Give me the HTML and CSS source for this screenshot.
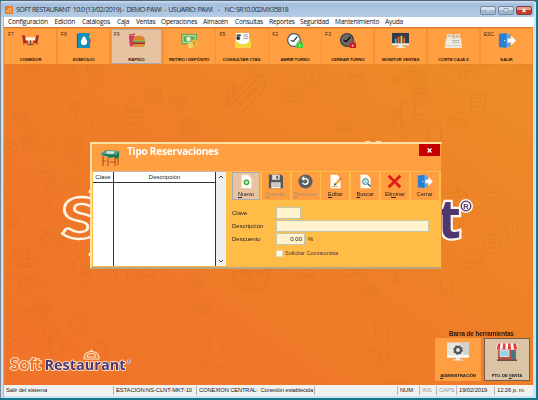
FILE: index.html
```html
<!DOCTYPE html>
<html lang="es">
<head>
<meta charset="utf-8">
<title>Soft Restaurant</title>
<link rel="stylesheet" href="styles.css">
</head>
<body>
<div class="window">
  <header class="titlebar">
    <svg class="app-icon" viewBox="0 0 8 8"><rect width="8" height="8" rx=".7" fill="#e97924"/><path d="M2 6V4.5h1.5V3H5V1.8h1V6M2 6h4" fill="none" stroke="#ffd5a0" stroke-width=".7"/></svg>
    <span class="title">SOFT RESTAURANT  10.0 (13/02/2019) -  DEMO PAWI  -  USUARIO: PAWI    -    NC: SR10.002MX35818</span>
    <div class="controls">
      <i><svg viewBox="0 0 16 9"><rect x="5" y="4" width="6" height="2" fill="#fff" stroke="#64748b" stroke-width=".5"/></svg></i>
      <i><svg viewBox="0 0 16 9"><rect x="5.500" y="2" width="5" height="4.500" fill="#fff" stroke="#56657b" stroke-width=".7"/><rect x="7.200" y="3.700" width="1.600" height="1.200" fill="#56657b"/></svg></i>
      <i class="red"><svg viewBox="0 0 16 9"><path d="M6 2.500l4 4m0-4l-4 4" stroke="#fff" stroke-width="1.500"/></svg></i>
    </div>
  </header>
  <nav class="menu">
    <span>Configuración</span><span>Edición</span><span>Catálogos</span><span>Caja</span><span>Ventas</span><span>Operaciones</span><span>Almacén</span><span>Consultas</span><span>Reportes</span><span>Seguridad</span><span>Mantenimiento</span><span>Ayuda</span>
  </nav>
  <main class="desk">
    <svg class="wall" viewBox="0 0 530 358">
      <defs>
        <g id="doodles" fill="none" stroke="#a85b18" stroke-width="1">
          <path d="M22 13l14 3-9 14zM23 14q6-4 12 2"/><circle cx="28" cy="19" r="1.2"/>
          <circle cx="69" cy="18" r="4"/><circle cx="69" cy="18" r="1.6"/>
          <circle cx="118" cy="-4" r="8"/><path d="M113-4q5-6 9 0t-6 2"/>
          <path d="M83 11h16l-2 20H85zM81 9h20M88 14v14m3-14v14m3-14v14"/>
          <path d="M133 7q6-8 14 0-7 6-14 0zm14 0l4 5"/>
          <path d="M8 64q8-9 18 0zM7 67h20M10 70h14"/>
          <path d="M65 60v-9h3v8-11h3v11-9h3v10l-3 10h-5zM82 58q9-12 18 0z"/>
          <circle cx="27" cy="90" r="9"/><circle cx="27" cy="90" r="6"/><path d="M27 84v12m-6-6h12m-10-4l8 8m0-8l-8 8"/>
          <path d="M143 32h14v18h-14zm3 4h8m-8 4h8m-8 4h8"/>
          <path d="M120 57q11-14 20 1zM118 60h23l-3 5h-17z"/>
          <path d="M144 -3q10-6 15 4"/>
          <path d="M32 120h15l-1 18H35zM35 118q-1-5 5-4"/>
          <path d="M37 150h9l-2 12h-5zM24 149q5-8 10 0z"/>
          <path d="M4 125q8-10 11 0-5 9-11 0z"/>
          <path d="M42 180h24v3H42zm2 6h22m-22 4h22m-20 3h18"/>
          <path d="M89 189q12-9 19 2-9 18-18 9-3-5-1-11zm4 4l1 1m4-2l1 1m-4 4l1 1m4-3l1 1"/>
          <path d="M62 199h14q-1 12-7 12t-7-12zm7 12v8m-4 0h8"/>
          <path d="M112 220q0-7 7-7t4 8l1 12h-9z"/>
          <path d="M15 211q9-10 18 0-9 9-18 0zm2-4h14m-13 7h12"/>
        </g>
      </defs>
      <g opacity=".12">
        <use href="#doodles" y="25"/>
        <use href="#doodles" x="158" y="10"/>
        <use href="#doodles" x="324" y="35"/>
        <use href="#doodles" x="12" y="190"/>
        <use href="#doodles" x="172" y="190"/>
        <use href="#doodles" x="338" y="176"/>
        <use href="#doodles" x="390" y="-20"/>
        <use href="#doodles" x="-22" y="102"/>
        <g fill="none" stroke="#a85b18" stroke-width="1.200">
          <path d="M223 76l24-26q10-4 14 3 2 6-3 11l-22 24q-12 8-16-1-2-7 3-11zm4 2l25-25m-21 30l26-27"/>
          <path d="M228 245h38l-7 17h-24zM397 75h14v22h-14z"/>
        </g>
      </g>
      <g font-family="Lato, sans-serif" font-weight="900" font-size="57">
        <text transform="translate(57 212) scale(1.25 1)" fill="#ee762a" stroke="#fff5e3" stroke-width="2.300">S</text>
        <text x="433.500" y="211" font-family="Open Sans, sans-serif" font-weight="700" font-size="54" fill="#51376f" stroke="#fff7ee" stroke-width="4.500" paint-order="stroke">t</text>
      </g>
      <circle cx="462" cy="179" r="7" fill="#fff7ee"/><circle cx="462" cy="179" r="4.800" fill="#fff7ee" stroke="#51376f" stroke-width="1.300"/>
      <text x="459.300" y="181.700" font-family="Liberation Sans, sans-serif" font-weight="700" font-size="7.500" fill="#51376f">R</text>
      <path d="M361 115h5m6 0h5M85.500 163v3m0 60v3" stroke="#fff" stroke-width="1.500"/>
      <g font-weight="700" paint-order="stroke">
        <text x="6" y="343" font-family="Lato, sans-serif" font-size="16.500" font-weight="900" textLength="31" fill="#ee762a" stroke="#fff0dc" stroke-width="1.700">Soft</text>
        <text x="40.500" y="343" font-family="Open Sans, sans-serif" font-size="15" textLength="81" lengthAdjust="spacingAndGlyphs" fill="#51376f" stroke="#fff0dc" stroke-width="1.600">Restaurant</text>
        <text x="123" y="336.500" font-family="Liberation Sans, sans-serif" font-size="5" fill="#6a4a70" stroke="#fff0dc" stroke-width=".5">®</text>
      </g>
      <path d="M80 332q0-7.500 7.500-7.500t7.500 7.500zM83 330q0-3.500 4.500-3.500t4.500 3.500z" fill="none" stroke="#ffe7c8" stroke-width="1.100"/><circle cx="87.500" cy="323.500" r="1.100" fill="#ffe7c8"/>
    </svg>

    <div class="toolbar">
      <div class="tool"><b>F7</b><svg viewBox="0 0 20 18"><path d="M1 3.500h3l1 5h2V12H2.500zM19 3.500h-3l-1 5h-2V12h4.500z" fill="#b02c2b"/><path d="M3 12v1.500m4-1.500v1.500m6-1.500v1.500m4-1.500v1.500" stroke="#7c3329" stroke-width=".9"/><path d="M5 5.500h10v3.500H5z" fill="#fff0d8"/><path d="M10 9v4M7.500 13.500h5" stroke="#63453c" stroke-width="1.200"/></svg><span>COMEDOR</span></div>
      <div class="tool"><b>F8</b><svg viewBox="0 0 20 18"><path d="M3 2h2v15H3z" fill="#12617c"/><rect x="4" y="1" width="13" height="16" rx="1" fill="#168fbd"/><path d="M16 3h2v3h-2z" fill="#e9b43c"/><path d="M16 8h2v3h-2z" fill="#df4b41"/><circle cx="10.500" cy="6.500" r="1.800" fill="#fff"/><circle cx="10.500" cy="10.500" r="3.300" fill="#fff"/></svg><span>DOMICILIO</span></div>
      <div class="tool active"><b>F9</b><svg viewBox="0 0 20 18"><path d="M2 4h6l-1 11H3z" fill="#d63464"/><path d="M2 3h6M6 3l2-2" stroke="#b1244d"/><path d="M6 9q0-5 6.500-5T19 9z" fill="#dc842b"/><path d="M5.500 9h14v2h-14z" fill="#72a83c"/><path d="M6 11h13v2H6z" fill="#9a2f23"/><path d="M6 13h13q0 3-3 3H9q-3 0-3-3z" fill="#df9038"/></svg><span>RÁPIDO</span></div>
      <div class="tool"><svg viewBox="0 0 20 18"><path d="M1 2h17v11H1z" fill="#61a956"/><path d="M3 4h13v7H3z" fill="none" stroke="#d7efc1"/><circle cx="9" cy="7.500" r="2.500" fill="#e0f0cc"/><circle cx="15" cy="12" r="4" fill="#e8b63a"/><circle cx="11" cy="14" r="3" fill="#f4cf63"/><path d="M15 10v4" stroke="#b27d1d"/></svg><span>RETIRO / DEPÓSITO</span></div>
      <div class="tool"><b>F5</b><svg viewBox="0 0 20 18"><path d="M2 8l8-5 9 5v9H2z" fill="#e5c52e"/><path d="M3 1h14v12H3z" fill="#fff"/><path d="M4 3h4v1H4zm0 2h3v3H4z" fill="#222" stroke="#333" stroke-width=".6"/><path d="M11 3h5m-5 2h5m-5 2h5" stroke="#777" stroke-width=".7"/><path d="M2 9l8.500 5L19 9v8H2z" fill="#f2d941"/></svg><span>CONSULTAR CTAS.</span></div>
      <div class="tool"><b>F2</b><svg viewBox="0 0 20 18"><circle cx="9.500" cy="8.500" r="6.800" fill="#fff" stroke="#4f5963" stroke-width="1.300"/><path d="M6 9l3 1 4-5" fill="none" stroke="#222" stroke-width="1.200"/><rect x="12" y="11.500" width="7" height="5.500" fill="#42d13a"/><path d="M13.500 12v-2q2-3 4 0v2" fill="none" stroke="#4fae45"/><path d="M15 13.500h1v2h-1z" fill="#fff"/></svg><span>ABRIR TURNO</span></div>
      <div class="tool"><b>F3</b><svg viewBox="0 0 20 18"><circle cx="9.500" cy="8.500" r="6.800" fill="#6b6b69" stroke="#444" stroke-width="1.500"/><path d="M6 9l3 1 4-5" fill="none" stroke="#111" stroke-width="1.400"/><rect x="12" y="11.500" width="7" height="5.500" fill="#da1c22"/><path d="M13.500 12v-2q2-3 4 0v2" fill="none" stroke="#a94840"/><path d="M15 13.500h1v2h-1z" fill="#fff"/></svg><span>CERRAR TURNO</span></div>
      <div class="tool"><svg viewBox="0 0 20 18"><rect x="1" y="1" width="18" height="12" fill="#333d47"/><path d="M4 12V7h2v5z" fill="#1ebdc8"/><path d="M7 12V5h2v7z" fill="#f15a32"/><path d="M10 12V4h2v8z" fill="#f5c03b"/><path d="M13 12V6h2v6z" fill="#e85a30"/><path d="M1 12h18v2H1zm7 2h4v2h3v1H5v-1h3z" fill="#e7ecec"/></svg><span>MONITOR VENTAS</span></div>
      <div class="tool"><svg viewBox="0 0 20 18"><path d="M2 7h16l1 10H1zM3 2h6v6H3zm8 0h6v6h-6z" fill="#eee9df"/><path d="M4 3h4v2H4zm8 0h4v3h-4z" fill="#c0c0bb"/><path d="M9 9h7m-7 2h7" stroke="#aaa59c" stroke-dasharray="2 .6"/><path d="M2 14.500h16" stroke="#c8c3ba" stroke-width=".7"/></svg><span>CORTE CAJA X</span></div>
      <div class="tool"><b>ESC</b><svg viewBox="0 0 20 18"><use href="#door"/></svg><span>SALIR</span></div>
    </div>

    <svg class="defs" width="0" height="0"><defs>
      <g id="door"><path d="M2 2h12v14H2z" fill="#57a9ef"/><path d="M2 2l8-1v16l-8-1z" fill="#2d7ed0"/><path d="M11 7h4V4l5 5-5 5v-3h-4z" fill="#fff"/><circle cx="8" cy="9" r=".8" fill="#bce0ff"/></g>
      <path id="page" d="M4 1h8l4 4v12H4z" fill="#fffdf5"/>
    </defs></svg>

    <section class="dialog">
      <header class="dialog-head">
        <svg class="table-icon" viewBox="0 0 20 18"><path d="M3 7v10m5-8v8m7-8v8m3-11v10M2 12h4m4 1h6" stroke="#b5531e" stroke-width="1.200"/><path d="M1 4l5-3 13 1-3 4-14 1z" fill="#519f88"/><path d="M1 5l15 1 3-4v6l-3 2-2-2-4 1-4-2-3-1z" fill="#177b58"/><path d="M7 2l8 .5-2 2.500-7-.5z" fill="#d8e5de"/></svg>
        <h1>Tipo Reservaciones</h1>
        <span class="close"><svg viewBox="0 0 8 8"><path d="M1.800 1.800l4.400 4.400m0-4.400L1.800 6.200" stroke="#fff" stroke-width="1.500"/></svg></span>
      </header>
      <div class="dialog-body">
        <div class="grid">
          <div class="col narrow"><span>Clave</span></div>
          <div class="col"><span>Descripción</span></div>
          <div class="scroll"><svg viewBox="0 0 6 4"><path d="M1 3l2-2 2 2" fill="none" stroke="#444"/></svg><svg viewBox="0 0 6 4"><path d="M1 1l2 2 2-2" fill="none" stroke="#444"/></svg></div>
        </div>
        <div class="side">
          <div class="actions">
            <div class="act active"><svg viewBox="0 0 20 18"><use href="#page"/><circle cx="10" cy="10" r="2.600" fill="#d8f0cc" stroke="#38a934" stroke-width="1.600"/></svg><span><u>N</u>uevo</span></div>
            <div class="act off"><svg viewBox="0 0 20 18"><path d="M2 1h15l2 2v14H2z" fill="#54575b"/><path d="M6 1h9v6H6z" fill="#e3e0dc"/><path d="M11 2h2v4h-2z" fill="#54575b"/><path d="M5 10h11v7H5z" fill="#f7f2eb"/><path d="M6 12h9m-9 2.500h9" stroke="#888"/></svg><span><u>G</u>uardar</span></div>
            <div class="act off"><svg viewBox="0 0 20 18"><circle cx="10" cy="9" r="8.500" fill="#606060"/><path d="M7 5.500h3.500a3.500 3.500 0 1 1-4 5" fill="none" stroke="#fff" stroke-width="1.700"/><path d="M5 5.500l3.500-3v6z" fill="#fff"/></svg><span><u>D</u>eshacer</span></div>
            <div class="act"><svg viewBox="0 0 20 18"><use href="#page"/><path d="M8 14l1-3 7-7 2 2-7 7z" fill="#edaa38"/><path d="M8 14l1-3 2 2z" fill="#444"/><path d="M15 5l1-1 2 2-1 1z" fill="#df4a3a"/><path d="M6 15h7" stroke="#aaa"/></svg><span><u>E</u>ditar</span></div>
            <div class="act"><svg viewBox="0 0 20 18"><use href="#page"/><circle cx="10" cy="9" r="3.600" fill="#a8dfed" stroke="#4d7689" stroke-width="1.100"/><path d="M13 12l3 3" stroke="#34586b" stroke-width="1.600"/></svg><span><u>B</u>uscar</span></div>
            <div class="act"><svg viewBox="0 0 20 18"><path d="M3 2l14 14M17 2L3 16" stroke="#df1d17" stroke-width="3.400"/></svg><span>Eli<u>m</u>inar</span></div>
            <div class="act"><svg viewBox="0 0 20 18"><use href="#door"/></svg><span>Cerrar</span></div>
          </div>
          <div class="form">
            <label>Clave</label><div class="field short"></div>
            <label>Descripción</label><div class="field"></div>
            <label>Descuento</label><div class="line"><div class="field num">0.00</div><span>%</span></div>
            <i></i><div class="line check"><span class="box"></span><span>Solicitar Comisionista</span></div>
          </div>
        </div>
      </div>
    </section>

    <aside class="tools">
      <h2>Barra de herramientas</h2>
      <div class="tiles">
        <div class="tile"><svg viewBox="0 0 24 20"><path d="M1 1h22v15H1z" fill="#e8e5e1"/><path d="M13 1h10v12H18z" fill="#d2d1cf"/><path d="M10 16h4v2h3v1H7v-1h3z" fill="#e6efef"/><path d="M1 14h22v2H1z" fill="#fff"/><circle cx="12" cy="8.500" r="3" fill="none" stroke="#4d5355" stroke-width="2"/><circle cx="12" cy="8.500" r="4.200" fill="none" stroke="#4d5355" stroke-width="1.300" stroke-dasharray="1.650"/></svg><span><u>A</u>DMINISTRACIÓN</span></div>
        <div class="tile active"><svg viewBox="0 0 24 20"><path d="M3 8h18v11H3z" fill="#b35646"/><path d="M5 9h9v6H5z" fill="#90d4ea" stroke="#eef" stroke-width=".7"/><path d="M16 9h4v9h-4z" fill="#477583"/><path d="M2 2h20l1 6H1z" fill="#fff"/><path d="M3 2h2.500L5 8H1.500zm5 0h2.500v6H7.500zm5 0h2.500l.5 6h-3zm5 0h3l1.500 6H19z" fill="#e0423d"/><path d="M2 18h20v1.500H2z" fill="#704a42"/></svg><span>PTO. DE <u>V</u>ENTA</span></div>
      </div>
    </aside>
  </main>
  <footer class="status">
    <span>Salir del sistema</span><span>ESTACION:NS-CLNT-MKT-10</span><span class="conn">CONEXION CENTRAL:&nbsp; Conexión establecida</span><span></span><span>NUM</span><span class="dim">INS</span><span class="dim">CAPS</span><span>19/02/2019</span><span>12:26 p. m.</span>
  </footer>
</div>
</body>
</html>
```
FILE: styles.css
```css
* { box-sizing: border-box; }
body { margin: 0; width: 538px; height: 400px; overflow: hidden; background: #147a8b; font-family: "Liberation Sans", sans-serif; font-size: 6px; line-height: 1; color: #222; }
svg { display: block; }
.window { width: 536px; height: 398px; padding: 0 2px 1px 4px; border-top: 1px solid #536478; background: linear-gradient(90deg, #7b8793 0 1px, #c9dff2 1px 3px, #9fb9d2 3px 4px, #c9e4f4 4px); display: flex; flex-direction: column; border-radius: 3px 3px 0 0; }
.titlebar { height: 16px; flex: none; margin-left: -3px; padding: 2px 0 0 4px; display: flex; align-items: center; background: linear-gradient(#cfe0f1 0, #a5bfdc 3px, #b4cbe4); }
.app-icon { width: 8px; height: 8px; margin-right: 3px; }
.title { flex: 1; font: 7px/10px "Open Sans", sans-serif; white-space: pre; letter-spacing: -.52px; color: #24303c; }
.controls { display: flex; gap: 2px; margin-right: 2px; }
.controls i { width: 16px; height: 9px; border: 1px solid #71859e; border-radius: 2px; background: linear-gradient(#d5e2f0 45%, #a4bad3 50%); }
.controls svg { width: 14px; height: 7px; }
.controls .red { background: linear-gradient(#e59b8c 45%, #c53d27 50%); border-color: #7d3c3e; }
.menu { height: 10px; flex: none; background: #fff; display: grid; grid-template-columns: 46.500px 27.500px 35px 19px 25px 42px 32px 34px 31px 35px 50px 30px; padding-left: 4px; font: 6.600px/9px "Open Sans", sans-serif; letter-spacing: -.24px; color: #111; }
.desk { position: relative; height: 358px; flex: none; margin-right: 1px; background: linear-gradient(35deg, #f07229 0%, #ee7c28 45%, #ed8e26 100%); overflow: hidden; }
.wall { position: absolute; left: 0; top: 0; width: 530px; height: 358px; }
.defs { position: absolute; }
.toolbar { position: relative; height: 37px; padding: 1px 1px 0; display: grid; grid-template-columns: repeat(10, 1fr); gap: 1.500px; background: #f49238; border-top: 1px solid #dd7b30; }
.tool { position: relative; height: 35px; background: #ff9f42; display: flex; flex-direction: column; align-items: center; padding-top: 3px; }
.tool b { position: absolute; left: 3px; top: 2px; font: 5px/6px "Liberation Sans", sans-serif; color: #3d2b16; }
.tool svg { width: 19px; height: 17px; }
.tool span { margin-top: 8px; font-weight: 700; font-size: 4.300px; line-height: 5px; letter-spacing: -.1px; color: #25180b; white-space: nowrap; }
.active { background: #e8c3a1 !important; box-shadow: inset 0 0 0 1px #aaa9b3; }
.dialog { position: absolute; left: 86px; top: 115px; width: 352px; height: 127px; background: #ffbd48; border: 2px solid #ffe1a3; border-right: 1px solid #a99a80; border-bottom: 2px solid #b9a582; }
.dialog-head { height: 27px; background: #ff9f42; display: flex; align-items: flex-start; padding-left: 8px; }
.table-icon { width: 20px; height: 18px; margin-top: 5px; }
.dialog-head h1 { margin: 0 0 0 7px; flex: 1; font: 700 10px/15px "Open Sans", sans-serif; color: #fff; white-space: nowrap; letter-spacing: -.22px; }
.close { width: 21px; height: 12px; margin: 0 1px 0 0; background: #c50000; display: flex; align-items: center; justify-content: center; }
.close svg { width: 7px; height: 7px; }
.dialog-body { display: flex; height: 95px; }
.grid { width: 133px; margin-left: 1px; display: flex; background: #fff; border-top: 1px solid #c1baa9; }
.col { flex: 1; border-right: 1px solid #333; text-align: center; }
.narrow { flex: none; width: 21px; }
.col span { display: block; height: 11px; line-height: 11px; border-bottom: 1px solid #333; }
.scroll { width: 10px; background: #efefef; display: flex; flex-direction: column; justify-content: space-between; align-items: center; padding: 3px 0; }
.scroll svg { width: 6px; height: 4px; }
.side { margin-left: 6px; width: 208px; }
.actions { display: grid; grid-template-columns: repeat(7, 28px); gap: 1.800px; height: 29px; padding-top: 1px; }
.act { background: #ff9f42; display: flex; flex-direction: column; align-items: center; padding-top: 2px; }
.act svg { width: 17px; height: 15px; }
.act span { margin-top: 3px; font-size: 5.600px; white-space: nowrap; }
.off span { color: #b28a69; }
.form { display: grid; grid-template-columns: 44px 153px; grid-template-rows: 11.500px 12px 11.500px 10px; row-gap: 1.400px; padding-top: 7px; align-items: center; }
.field { height: 100%; border: 1px solid #c2c6ae; background: #fff2cd; }
.short { width: 25px; }
.num { width: 29px; text-align: right; padding: 2px 2px 0 0; }
.line { display: flex; align-items: center; height: 100%; gap: 3px; }
.check { gap: 2px; color: #4c2d50; white-space: nowrap; font-size: 5.600px; padding-top: 5px; }
.box { width: 7px; height: 7px; background: #fffaf0; border: 1px solid #e7d9b4; }
.tools { position: absolute; right: 3px; bottom: 4px; width: 95px; }
.tools h2 { margin: 0 0 1px 14px; font: 700 6.300px/7px "Liberation Sans", sans-serif; color: #28180b; white-space: nowrap; letter-spacing: -.1px; }
.tiles { display: flex; justify-content: space-between; }
.tile { width: 46px; height: 43px; background: #ff9f42; display: flex; flex-direction: column; align-items: center; padding-top: 3px; }
.tiles .active { background: #dbc3a6 !important; box-shadow: inset 0 0 0 1px #765c4c; }
.tile svg { width: 24px; height: 21px; }
.tile span { margin-top: 12px; font-size: 4.300px; font-weight: 700; letter-spacing: -.15px; white-space: nowrap; }
.status { height: 11px; flex: none; margin-right: 1px; background: #f1f1f1; display: grid; grid-template-columns: 109px 83px 118px 83px 22px 17px 20px 38px 39px; }
.status span { margin: 1px 1px 1px 0; padding-left: 2px; border-left: 1px solid #b5b5b5; white-space: nowrap; line-height: 9px; font-size: 5.800px; letter-spacing: -.08px; }
.status .conn { letter-spacing: -.15px; }
.status span:first-child { border-left: 0; }
.status .dim { color: #969696; }
```
